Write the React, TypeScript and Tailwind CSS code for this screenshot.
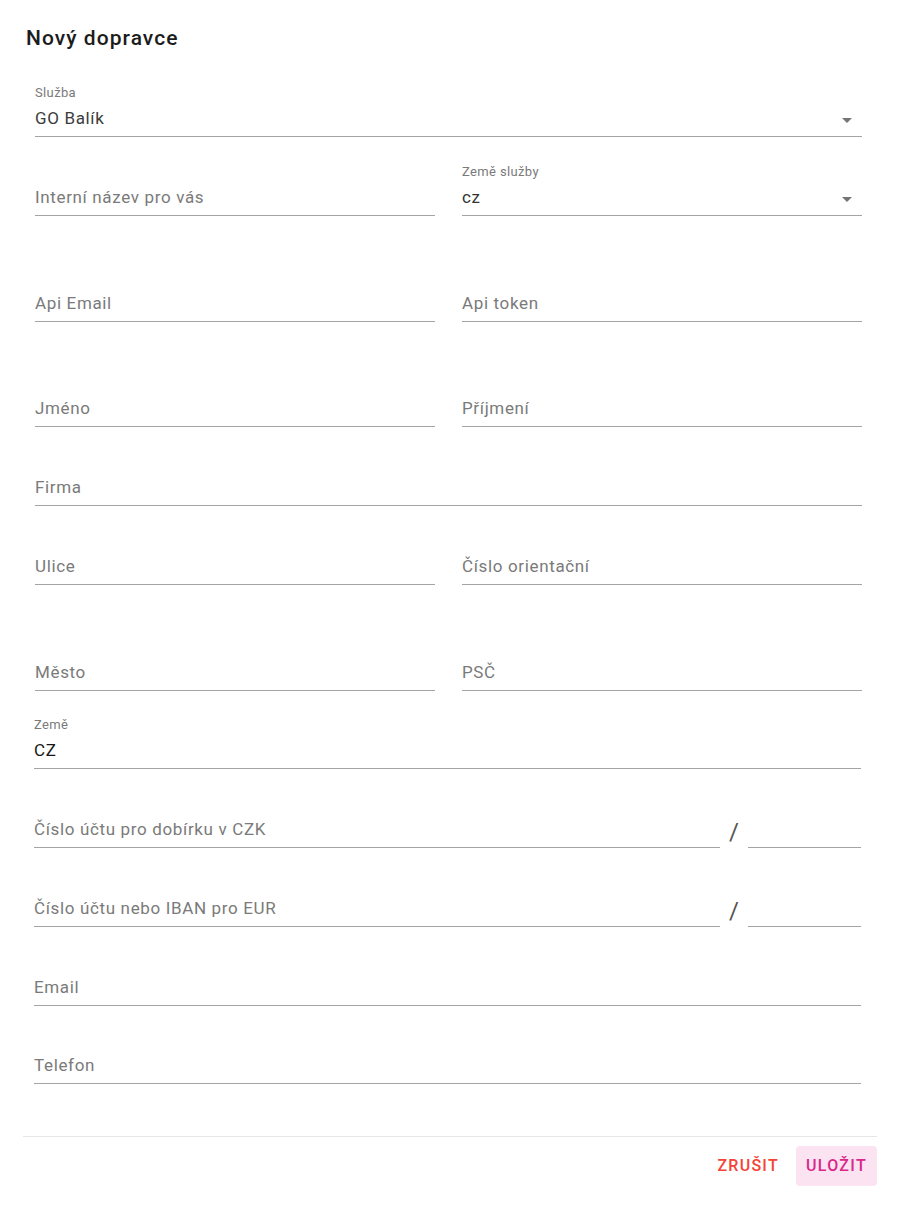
import React from "react";

const Arrow = () => (
  <svg width="24" height="24" viewBox="0 0 24 24" className="absolute right-[3px] top-[2px]">
    <path d="M7 10l5 5 5-5z" fill="#757575" />
  </svg>
);

type FieldProps = {
  label?: string;
  value?: string;
  placeholder?: string;
  select?: boolean;
  valueClass?: string;
  className?: string;
};

const Field = ({ label, value, placeholder, select, valueClass, className }: FieldProps) => (
  <div className={"flex flex-col h-[52px] border-b border-[#a4a4a4] " + (className ?? "")}>
    <div className="h-[16px] text-[13px] leading-[16px] tracking-[0.028em] text-[#7a7a7a]">{label ?? ""}</div>
    <div className="relative mt-[5px] h-[24px] text-[17px] leading-[24px] tracking-[0.038em]">
      {value !== undefined ? (
        <span className={valueClass ?? "text-[#3c3c3c]"}>{value}</span>
      ) : (
        <span className="text-[#7a7a7a]">{placeholder}</span>
      )}
      {select && <Arrow />}
    </div>
  </div>
);

export default function App() {
  return (
    <div
      className="w-[897px] h-[1209px] bg-white"
      style={{ fontFamily: "Roboto, 'Noto Sans', Arial, sans-serif" }}
    >
      <div className="pt-[24px] pl-[26px] h-[52px] text-[21px] leading-[28px] tracking-[0.05em] font-medium text-[#1c1c1c]">
        Nový dopravce
      </div>
      <div className="pl-[35px] pr-[35px] pt-[33px] flex flex-col">
        <Field label="Služba" value="GO Balík" select />
        <div className="mt-[27px] grid grid-cols-2 gap-x-[27px]">
          <Field placeholder="Interní název pro vás" />
          <Field label="Země služby" value="cz" select valueClass="text-[#333]" />
        </div>
        <div className="mt-[54px] grid grid-cols-2 gap-x-[27px]">
          <Field placeholder="Api Email" />
          <Field placeholder="Api token" />
        </div>
        <div className="mt-[53px] grid grid-cols-2 gap-x-[27px]">
          <Field placeholder="Jméno" />
          <Field placeholder="Příjmení" />
        </div>
        <div className="mt-[27px]">
          <Field placeholder="Firma" />
        </div>
        <div className="mt-[27px] grid grid-cols-2 gap-x-[27px]">
          <Field placeholder="Ulice" />
          <Field placeholder="Číslo orientační" />
        </div>
        <div className="mt-[54px] grid grid-cols-2 gap-x-[27px]">
          <Field placeholder="Město" />
          <Field placeholder="PSČ" />
        </div>
      </div>
      <div className="pl-[34px] pr-[36px] flex flex-col">
        <div className="mt-[26px]">
          <Field label="Země" value="CZ" valueClass="text-[#161616]" />
        </div>
        <div className="mt-[27px] flex items-end">
          <Field placeholder="Číslo účtu pro dobírku v CZK" className="flex-1" />
          <div className="w-[28px] h-[52px] flex items-end justify-center pb-[2px] text-[24px] leading-[28px] text-[#555]">/</div>
          <Field className="w-[113px]" />
        </div>
        <div className="mt-[27px] flex items-end">
          <Field placeholder="Číslo účtu nebo IBAN pro EUR" className="flex-1" />
          <div className="w-[28px] h-[52px] flex items-end justify-center pb-[2px] text-[24px] leading-[28px] text-[#555]">/</div>
          <Field className="w-[113px]" />
        </div>
        <div className="mt-[27px]">
          <Field placeholder="Email" />
        </div>
        <div className="mt-[26px]">
          <Field placeholder="Telefon" />
        </div>
      </div>
      <div className="mr-[20px] ml-[23px] mt-[52px] border-t border-[#e6e6e6]" />
      <div className="flex justify-end items-center gap-[8px] pr-[20px] pt-[9px]">
        <button className="h-[40px] px-[9px] text-[16px] font-medium tracking-[0.08em] text-[#f44336] rounded-[4px]">
          ZRUŠIT
        </button>
        <button className="h-[40px] w-[81px] text-[16px] font-medium tracking-[0.08em] text-[#d9278a] bg-[#fbe3f1] rounded-[4px]">
          ULOŽIT
        </button>
      </div>
    </div>
  );
}
